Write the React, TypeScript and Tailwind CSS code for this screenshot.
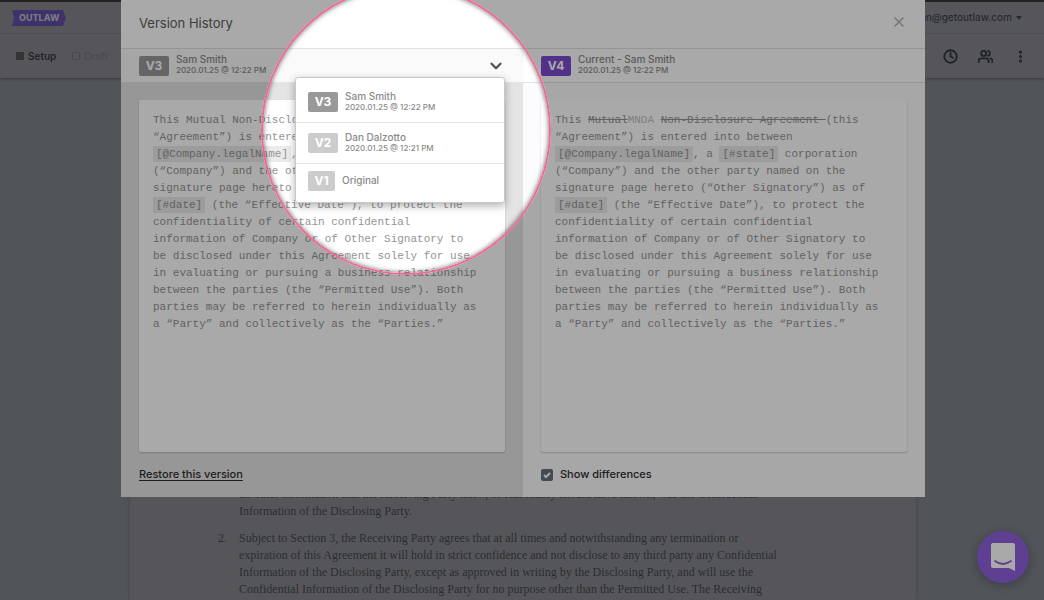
import type { ReactNode } from 'react';
import { ChevronDown, Clock, MoreVertical, X } from 'lucide-react';
import { FiUsers } from 'react-icons/fi';

type Version = { label: string; author: string; date?: string; tone: string };

const versions: Version[] = [
    { label: 'V3', author: 'Sam Smith', date: '2020.01.25 @ 12:22 PM', tone: 'bg-[#999999]' },
    { label: 'V2', author: 'Dan Dalzotto', date: '2020.01.25 @ 12:21 PM', tone: 'bg-[#cccccc]' },
    { label: 'V1', author: 'Original', tone: 'bg-[#cccccc]' },
];

function VersionTag({ label, author, date, tone }: Version) {
    return (
        <span className="flex items-center gap-[7px] text-left text-[#8a8a8a]">
            <span className={`flex h-5 items-center justify-center rounded-xs text-xs font-bold text-white ${date ? 'w-[30px]' : 'w-[27px]'} ${tone}`}>
                {label}
            </span>
            <span className="flex flex-col pb-px">
                <span className="text-[10px] leading-[11px] font-medium">{author}</span>
                {date && <span className="text-[8px] leading-[11px] font-medium">{date}</span>}
            </span>
        </span>
    );
}

function Variable({ children }: { children: ReactNode }) {
    return <span className="bg-[#ebebeb] px-[3px] py-[2px]">{children}</span>;
}

function Contract({ opening }: { opening: ReactNode }) {
    return (
        <article className="min-h-[352px] rounded-xs bg-white py-3 pr-6 pl-[14px] font-['Liberation_Mono',monospace] text-[11px] leading-[17px] text-[#949494] shadow-[0_1px_2px_rgba(0,0,0,0.2)]">
            This {opening}(this
            <br />
            “Agreement”) is entered into between
            <br />
            <Variable>[@Company.legalName]</Variable>, a <Variable>[#state]</Variable> corporation
            <br />
            (“Company”) and the other party named on the
            <br />
            signature page hereto (“Other Signatory”) as of
            <br />
            <Variable>[#date]</Variable> (the “Effective Date”), to protect the
            <br />
            confidentiality of certain confidential
            <br />
            information of Company or of Other Signatory to
            <br />
            be disclosed under this Agreement solely for use
            <br />
            in evaluating or pursuing a business relationship
            <br />
            between the parties (the “Permitted Use”). Both
            <br />
            parties may be referred to herein individually as
            <br />
            a “Party” and collectively as the “Parties.”
        </article>
    );
}

function AppHeader() {
    return (
        <header className="border-t-2 border-[#35363a] bg-[#828388] shadow-[0_1px_3px_rgba(0,0,0,0.35)]">
            <div className="flex h-8 items-center justify-between border-b border-[#75767c] px-3">
                <a href="#" aria-label="Outlaw">
                    <svg width="54" height="16" viewBox="0 0 54 16">
                        <path d="M0 0h51l3 8-3 8H0l2-8z" fill="#5f4a9f" />
                        <text x="7" y="11" fontSize="9" fontWeight="800" fontFamily="Inter, sans-serif" fill="#b9b6c6">OUTLAW</text>
                    </svg>
                </a>
                <button type="button" className="mr-[10px] flex items-center gap-1 text-[10px] font-medium text-[#3c4048]">
                    dan@getoutlaw.com
                    <svg width="6" height="4" viewBox="0 0 6 4"><path d="M0 0h6L3 4z" fill="currentColor" /></svg>
                </button>
            </div>
            <div className="flex h-11 items-center justify-between px-4">
                <nav className="flex items-center gap-4 text-[10px]">
                    <a href="#" className="flex items-center gap-1 font-semibold text-[#33363c]">
                        <span className="size-2 rounded-[1px] bg-[#4a4d54]" />
                        Setup
                    </a>
                    <a href="#" className="flex items-center gap-1 font-medium text-[#6c7077]">
                        <span className="size-2 rounded-[1px] border border-[#6c7077]" />
                        Draft
                    </a>
                </nav>
                <div className="flex items-center gap-5 text-[#30343d]">
                    <button type="button" aria-label="History"><Clock size={15} strokeWidth={3} /></button>
                    <button type="button" aria-label="People"><FiUsers size={15} strokeWidth={3} /></button>
                    <button type="button" aria-label="More"><MoreVertical size={15} strokeWidth={3} /></button>
                </div>
            </div>
        </header>
    );
}

function AgreementSheet() {
    return (
        <main className="flex min-h-0 grow justify-center pl-0.5">
            <div className="flex w-full max-w-[786px] flex-col justify-end bg-[#828388] pb-0.5 pl-[88px] shadow-[0_0_4px_rgba(0,0,0,0.25)]">
                <ol className="flex flex-col gap-[10px] font-['Liberation_Serif',serif] text-xs leading-[17px] text-[#3f434b]">
                    <li className="flex">
                        <span className="w-[21px] shrink-0" />
                        <p>
                            all other information that the Receiving Party knew, or reasonably should have known, was the Confidential
                            <br />
                            Information of the Disclosing Party.
                        </p>
                    </li>
                    <li className="flex">
                        <span className="w-[21px] shrink-0">2.</span>
                        <p>
                            Subject to Section 3, the Receiving Party agrees that at all times and notwithstanding any termination or
                            <br />
                            expiration of this Agreement it will hold in strict confidence and not disclose to any third party any Confidential
                            <br />
                            Information of the Disclosing Party, except as approved in writing by the Disclosing Party, and will use the
                            <br />
                            Confidential Information of the Disclosing Party for no purpose other than the Permitted Use. The Receiving
                        </p>
                    </li>
                </ol>
            </div>
        </main>
    );
}

function VersionHistory() {
    return (
        <section role="dialog" aria-labelledby="version-title" className="relative w-full max-w-[804px] bg-white">
            <div className="flex h-[49px] items-center justify-between border-b border-[#e0e0e0] px-[18px]">
                <h1 id="version-title" className="text-[13px] text-[#5c5c5c]">Version History</h1>
                <button type="button" aria-label="Close" className="mb-1 text-[#b0b0b0]"><X size={16} strokeWidth={2} /></button>
            </div>
            <div className="grid grid-cols-2">
                <div className="flex flex-col bg-[#e4e4e4]">
                    <div className="relative flex h-[34px] items-center justify-between border-b border-[#e6e6e6] bg-[#fafafa] px-[18px]">
                        <VersionTag {...versions[0]} />
                        <button type="button" aria-label="Choose version" aria-expanded="true" className="text-[#505050]">
                            <ChevronDown size={18} strokeWidth={3} />
                        </button>
                        <ul className="absolute top-[28px] right-[18px] z-10 w-[210px] rounded-[3px] border border-[#c8c8c8] bg-white py-1 shadow-[0_3px_9px_rgba(0,0,0,0.3)]">
                            {versions.map((version) => (
                                <li key={version.label} className="border-b border-[#e4e4e4] last:border-b-0">
                                    <button type="button" className={`flex w-full items-center px-3 ${version.date ? 'h-10' : 'h-[34px]'}`}>
                                        <VersionTag {...version} />
                                    </button>
                                </li>
                            ))}
                        </ul>
                    </div>
                    <div className="px-[18px] pt-[17px]">
                        <Contract opening="Mutual Non-Disclosure Agreement " />
                    </div>
                    <div className="flex h-[45px] items-center px-[18px]">
                        <a href="#" className="text-[11px] font-medium text-[#2e2e2e] underline underline-offset-2">Restore this version</a>
                    </div>
                </div>
                <div className="flex flex-col bg-[#fcfcfe]">
                    <div className="flex h-[34px] items-center border-b border-[#e2e2e2] bg-white px-[18px]">
                        <VersionTag label="V4" author="Current - Sam Smith" date="2020.01.25 @ 12:22 PM" tone="bg-[#7a4bd1]" />
                    </div>
                    <div className="px-[18px] pt-[17px]">
                        <Contract
                            opening={
                                <>
                                    <s>Mutual</s>
                                    <span className="text-[#c0c0c0]">MNDA</span> <s>Non-Disclosure Agreement </s>
                                </>
                            }
                        />
                    </div>
                    <label className="flex h-[45px] items-center gap-[7px] px-[18px] text-[11px] font-medium text-[#2e2e2e]">
                        <span className="relative flex">
                            <input type="checkbox" defaultChecked className="size-3 appearance-none rounded-xs bg-[#666f80]" />
                            <svg viewBox="0 0 12 12" className="pointer-events-none absolute inset-0 size-3">
                                <path d="M3 6l2 2 4-4" fill="none" stroke="#fff" strokeWidth="2" />
                            </svg>
                        </span>
                        Show differences
                    </label>
                </div>
            </div>
            {/* spotlight: the ring's outer shadow dims everything around it */}
            <div className="pointer-events-none absolute -top-[15px] left-[140px] z-20 size-[290px] rounded-full border-2 border-[#ec6a92] shadow-[0_0_0_2000px_rgba(0,0,0,0.337),inset_0_0_5px_rgba(0,0,0,0.6)]" />
        </section>
    );
}

export default function App() {
    return (
        <div className="relative flex h-screen flex-col overflow-hidden bg-[#7b8188] font-['Inter',sans-serif]">
            <AppHeader />
            <AgreementSheet />
            <button
                type="button"
                aria-label="Open chat"
                className="absolute right-[15px] bottom-[17px] flex size-[52px] items-center justify-center rounded-full bg-[#8f60dc] shadow-[0_2px_12px_rgba(0,0,0,0.3)]"
            >
                <svg width="26" height="30" viewBox="0 0 26 30">
                    <path d="M3 1h20a2 2 0 0 1 2 2v26l-6-3H3a2 2 0 0 1-2-2V3a2 2 0 0 1 2-2z" fill="#fff" />
                    <path d="M5 19q8 6 16 0" fill="none" stroke="#8f60dc" strokeWidth="1.8" strokeLinecap="round" />
                </svg>
            </button>
            <div className="absolute inset-0 flex items-start justify-center pl-0.5">
                <VersionHistory />
            </div>
        </div>
    );
}
